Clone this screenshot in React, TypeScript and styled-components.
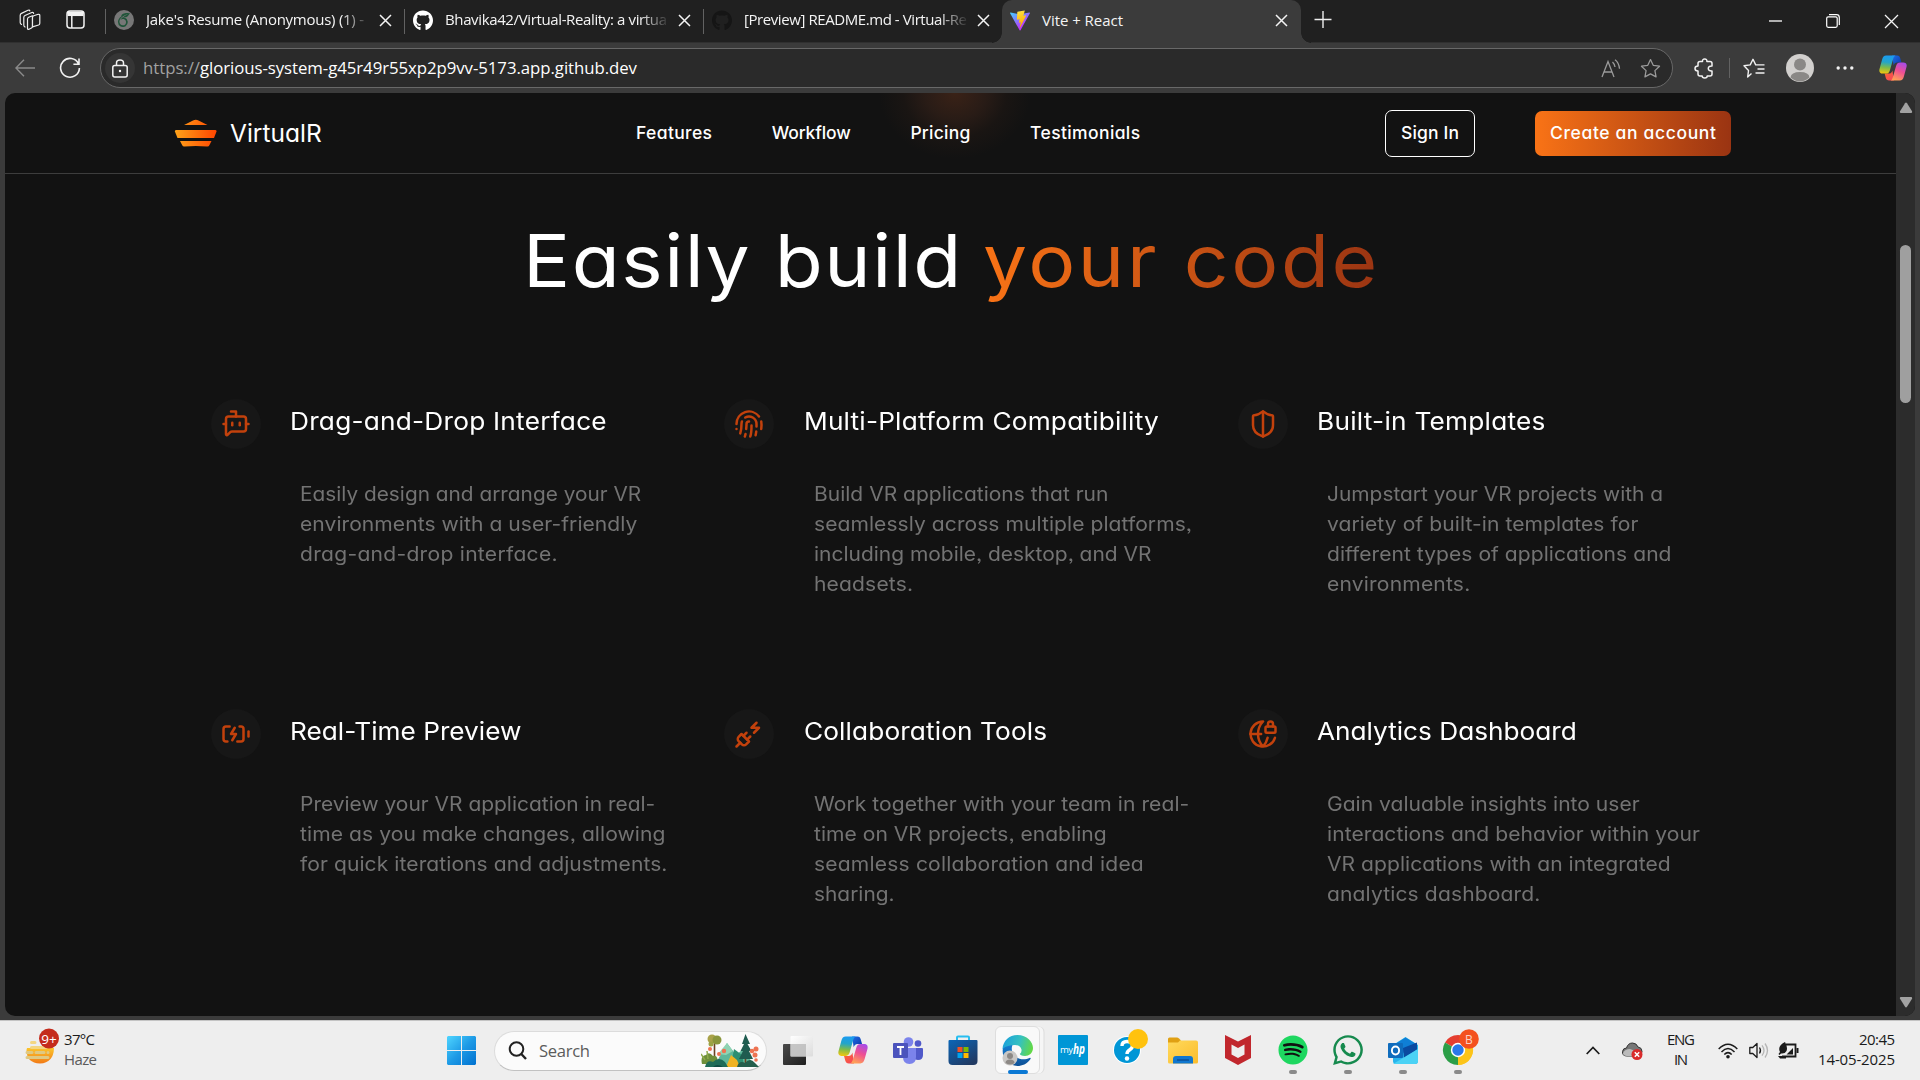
import React, { useLayoutEffect, useRef, useState } from "react";
import styled, { createGlobalStyle, css } from "styled-components";
import {
  BatteryCharging,
  BotMessageSquare,
  Fingerprint,
  GlobeLock,
  PlugZap,
  ShieldHalf,
} from "lucide-react";
import { FaGithub, FaSpotify, FaWhatsapp } from "react-icons/fa";
import { SiOverleaf } from "react-icons/si";

const UI = `"Open Sans", "Noto Sans", sans-serif`;
const SITE = `Inter, "Open Sans", sans-serif`;

const Global = createGlobalStyle`
  * { box-sizing: border-box; }
  body { margin: 0; background: #3b3b3b; overflow: hidden; }
  p, h1, h2 { margin: 0; font-weight: 400; }
`;

/* ---------- text set to a fixed measure ---------- */

const Measure = styled.span`
  display: inline-block;
  white-space: pre;
`;

const Wide = styled.span<{ $gradient?: boolean }>`
  display: inline-block;
  white-space: pre;
  transform-origin: 0 50%;
  ${(p) => p.$gradient && css`
    padding-bottom: 12px;
    background: linear-gradient(90deg, #f97316, #9a3412);
    background-clip: text;
    -webkit-background-clip: text;
    color: transparent;
  `}
`;

/* Tracks the letters out (or in) until the line is w pixels long. */
function Fit({ w, children }: { w: number; children: string }) {
  const ref = useRef<HTMLSpanElement>(null);
  const [gap, setGap] = useState(0);
  useLayoutEffect(() => {
    const el = ref.current;
    if (!el) return;
    const natural = el.getBoundingClientRect().width;
    setGap((w - natural) / Math.max(1, children.length - 1));
  }, [w, children]);
  return (
    <Measure ref={ref} style={{ letterSpacing: gap, marginRight: -gap }}>
      {children}
    </Measure>
  );
}

function Stretch({ w, gradient, children }: { w: number; gradient?: boolean; children: string }) {
  const ref = useRef<HTMLSpanElement>(null);
  const [k, setK] = useState({ scale: 1, gap: 0 });
  useLayoutEffect(() => {
    const el = ref.current;
    if (!el) return;
    const natural = el.offsetWidth;
    const scale = Math.min(w / natural, 1.075);
    setK({ scale, gap: (w / scale - natural) / Math.max(1, children.length - 1) });
  }, [w, children]);
  return (
    <Measure style={{ width: w }}>
      <Wide ref={ref} $gradient={gradient} style={{ transform: `scaleX(${k.scale})`, letterSpacing: k.gap }}>{children}</Wide>
    </Measure>
  );
}

/* ---------- shell ---------- */

const Screen = styled.div`
  width: 1920px;
  height: 1080px;
  display: flex;
  flex-direction: column;
  background: #3b3b3b;
  font-family: ${UI};
  overflow: hidden;
`;

const Center = styled.span<{ w: number; $shift?: number }>`
  flex: none;
  width: ${(p) => p.w}px;
  padding-left: ${(p) => p.$shift ?? 0}px;
  display: flex;
  align-items: center;
  justify-content: center;
  svg { display: block; flex: none; }
`;

/* ---------- tab strip ---------- */

const TabStrip = styled.div`
  flex: none;
  height: 43px;
  display: flex;
  align-items: stretch;
  background: #202020;
  color: #f4f4f4;
  border-bottom: 1px solid #303030;
`;

const StripTools = styled.div`
  width: 105px;
  padding: 0 20px 3px 19px;
  display: flex;
  align-items: center;
  justify-content: space-between;
`;

const Tab = styled.div<{ w: number; $active?: boolean }>`
  position: relative;
  width: ${(p) => p.w}px;
  height: ${(p) => (p.$active ? 43 : 42)}px;
  padding: 0 0 2px 8px;
  display: flex;
  align-items: center;
  background: ${(p) => (p.$active ? "#3b3b3b" : "transparent")};
  border-radius: 10px 10px 0 0;
  &::before, &::after {
    content: "";
    display: ${(p) => (p.$active ? "block" : "none")};
    position: absolute;
    bottom: 0;
    width: 10px;
    height: 10px;
  }
  &::before { left: -10px; background: radial-gradient(circle at 0 0, #202020 9.5px, #3b3b3b 10px); }
  &::after { right: -10px; background: radial-gradient(circle at 100% 0, #202020 9.5px, #3b3b3b 10px); }
`;

const Divider = styled.i<{ $hidden?: boolean; $bar?: boolean }>`
  flex: none;
  width: 1px;
  height: ${(p) => (p.$bar ? 20 : 25)}px;
  margin-top: ${(p) => (p.$bar ? 0 : 9)}px;
  background: ${(p) => (p.$hidden ? "transparent" : "#626262")};
`;

const TabTitle = styled.div<{ $fade?: boolean }>`
  width: 224px;
  margin-left: 12px;
  padding-bottom: 2px;
  font-size: 15px;
  line-height: 30px;
  white-space: nowrap;
  mask-image: ${(p) => (p.$fade ? "linear-gradient(90deg, #000 195px, transparent 225px)" : "none")};
`;

const Favicon = styled.span<{ $bg?: string; $fg?: string }>`
  flex: none;
  width: 20px;
  height: 20px;
  border-radius: 50%;
  display: flex;
  align-items: center;
  justify-content: center;
  background: ${(p) => p.$bg ?? "transparent"};
  color: ${(p) => p.$fg ?? "#fff"};
`;

const WindowControls = styled.div`
  margin-left: auto;
  display: flex;
`;

/* ---------- toolbar ---------- */

const Toolbar = styled.div`
  flex: none;
  height: 50px;
  display: flex;
  align-items: center;
  color: #eee;
`;

const Address = styled.div`
  flex: none;
  width: 1573px;
  height: 40px;
  padding: 0 0 0 4px;
  display: flex;
  align-items: center;
  border: 1px solid #686868;
  border-radius: 20px;
  background: #2a2a2a;
`;

const LockDisc = styled.span`
  width: 30px;
  height: 30px;
  border-radius: 50%;
  background: #353535;
  display: flex;
  align-items: center;
  justify-content: center;
`;

const Url = styled.div`
  flex: 1;
  margin-left: 8px;
  font-size: 16.8px;
  line-height: 34px;
  color: #fff;
`;

const Scheme = styled.span`
  color: #a2a2a2;
`;

/* ---------- page ---------- */

const Viewport = styled.div`
  flex: none;
  height: 923px;
  margin: 0 5px;
  display: flex;
  border-radius: 10px;
  overflow: hidden;
  background: #121212;
`;

const Page = styled.div`
  width: 1891px;
  font-family: ${SITE};
  font-feature-settings: "cv11", "ss03";
  font-optical-sizing: none;
  color: #fff;
`;

const Nav = styled.nav`
  height: 81px;
  padding: 0 165px 0 169px;
  display: flex;
  align-items: center;
  border-bottom: 1px solid #3d3d3d;
  background: radial-gradient(ellipse 76px 66px at 950px 0, #3a2217 0%, #332018b0 40%, #2a1c1550 68%, #22191500 100%);
`;

const Brand = styled.div`
  width: 462px;
  display: flex;
  align-items: center;
  gap: 13px;
  font-size: 24.5px;
  svg { flex: none; }
`;

const Links = styled.div`
  width: 749px;
  padding-bottom: 1px;
  display: flex;
  gap: 59.7px;
  font-size: 17.5px;
  font-weight: 500;
`;

const Button = styled.button<{ $filled?: boolean }>`
  height: ${(p) => (p.$filled ? 45 : 47)}px;
  width: ${(p) => (p.$filled ? 196 : 90)}px;
  margin-right: ${(p) => (p.$filled ? 0 : 60)}px;
  padding: 0 0 1px;
  flex: none;
  border: ${(p) => (p.$filled ? "none" : "1px solid #fff")};
  border-radius: 7px;
  background: ${(p) => (p.$filled ? "linear-gradient(90deg, #f97316, #9a3412)" : "transparent")};
  color: #fff;
  font: 500 17.5px ${SITE};
  font-feature-settings: inherit;
`;

const Heading = styled.h1`
  height: 125px;
  padding: 49px 0 0 518px;
  font-size: 73px;
  line-height: 76px;
  display: flex;
  gap: 22px;
`;

const Grid = styled.div`
  margin: 100px 0 0 206px;
  display: grid;
  grid-template-columns: repeat(3, 513.3px);
  grid-auto-rows: 310px;
`;

const Feature = styled.article`
  display: flex;
  gap: 29.3px;
`;

const IconDisc = styled.div`
  flex: none;
  width: 50px;
  height: 50px;
  border-radius: 50%;
  display: flex;
  align-items: center;
  justify-content: center;
  background: #171717;
  color: #c2410c;
`;

const FeatureTitle = styled.h2`
  font-size: 24.4px;
  line-height: 44px;
  white-space: nowrap;
`;

const FeatureText = styled.p`
  padding: 36px 0 0 10px;
  font-size: 19.6px;
  line-height: 30px;
  color: #737373;
  display: flex;
  flex-direction: column;
  align-items: flex-start;
`;

const Scrollbar = styled.div`
  width: 19px;
  padding: 9px 0 8px;
  display: flex;
  flex-direction: column;
  align-items: center;
  background: #2c2c2c;
`;

const Thumb = styled.div`
  width: 11px;
  height: 158px;
  margin-top: 131px;
  margin-bottom: auto;
  border-radius: 6px;
  background: #9f9f9f;
`;

/* ---------- taskbar ---------- */

const Taskbar = styled.div`
  margin-top: 4px;
  flex: none;
  height: 60px;
  display: flex;
  align-items: center;
  background: #eeeeee;
  border-top: 1px solid #c4c4c4;
  color: #1b1b1b;
  font-size: 15px;
  line-height: 20px;
`;

const Weather = styled.div`
  width: 447px;
  padding-left: 22px;
  display: flex;
  align-items: center;
  gap: 4px;
`;

const Lines = styled.div<{ $align?: string }>`
  display: flex;
  flex-direction: column;
  align-items: ${(p) => p.$align ?? "flex-start"};
  padding-bottom: 4px;
`;

const Muted = styled.span`
  color: #5a5a5a;
`;

const SearchBox = styled.div`
  width: 273px;
  height: 40px;
  margin-left: 18px;
  padding: 0 6px 0 13px;
  display: flex;
  align-items: center;
  border: 1px solid #dcdcdc;
  border-bottom-color: #c2c2c2;
  border-radius: 20px;
  background: #fbfbfb;
  font-size: 16.6px;
  color: #5c5c5c;
`;

const SearchLabel = styled.span`
  flex: 1;
  padding: 0 0 0 12px;
`;

const Apps = styled.div`
  margin-left: 3px;
  height: 59px;
  display: flex;
`;

const AppCell = styled.div<{ $state?: "open" | "active" }>`
  width: 55px;
  display: flex;
  flex-direction: column;
  align-items: center;
  padding-top: 5px;
  &::after {
    content: "";
    width: ${(p) => (p.$state === "active" ? 20 : 8)}px;
    height: 4px;
    border-radius: 2px;
    margin-top: -4px;
    background: ${(p) => (p.$state === "active" ? "#0a78d4" : p.$state ? "#8a8a8a" : "transparent")};
  }
`;

const Slot = styled.div<{ $on?: boolean }>`
  width: 45px;
  height: 48px;
  flex: none;
  display: flex;
  align-items: center;
  justify-content: center;
  border-radius: 6px;
  border: 1px solid ${(p) => (p.$on ? "#dedede" : "transparent")};
  background: ${(p) => (p.$on ? "#f9f9f9" : "transparent")};
  box-shadow: ${(p) => (p.$on ? "4px 0 0 -0.5px #f6f6f6, 5px 0 0 -0.5px #dcdcdc" : "none")};
  svg { flex: none; overflow: visible; }
`;

const Tray = styled.div`
  margin-left: auto;
  padding-right: 25px;
  display: flex;
  align-items: center;
`;

/* ---------- drawings ---------- */

const Cross = ({ s = 11, w = 1.5 }: { s?: number; w?: number }) => (
  <svg width={s + 2} height={s + 2} viewBox={`-1 -1 ${s + 2} ${s + 2}`} stroke="currentColor" strokeWidth={w}>
    <path d={`M0 0L${s} ${s}M${s} 0L0 ${s}`} />
  </svg>
);

const Workspaces = () => (
  <svg width="22" height="22" viewBox="0 0 22 22" fill="#202020" stroke="#eee" strokeWidth="1.2" strokeLinejoin="round" strokeLinecap="round">
    <path d="M2.500 15.500q-1.300-.6-1.300-2V6.500q0-1.500 1.300-2.100L9 1.300q1.600-.6 1.800.6" fill="none" />
    <path d="M6 18q-1.200-.6-1.200-2V8.500q0-1.400 1.200-2L12.800 3.500q1.600-.5 1.800.8" fill="none" />
    <path d="M8.500 10.200q0-1.400 1.200-1.900l3.800-1.500v10.500q0 1.200-1 1.700l-2.500 1.200q-1.500.5-1.500-1z" />
    <path d="M13.500 8.500q0-1.300 1.200-1.800l4.500-1.400q1.600-.3 1.600 1.200v7.800q0 1.300-1.200 1.700l-6.100 1.800z" />
  </svg>
);

const VerticalTabs = () => (
  <svg width="19" height="19" viewBox="0 0 19 19" fill="none" stroke="#f2f2f2" strokeWidth="1.500">
    <rect x="1" y="1" width="17" height="17" rx="3" />
    <path d="M1.500 3.800h16" strokeWidth="4.500" />
    <path d="M5.800 5v13" />
  </svg>
);

const ViteLogo = () => (
  <svg width="21" height="21" viewBox="0 0 256 257">
    <defs>
      <linearGradient id="va" x1="0" y1="0" x2=".6" y2=".8"><stop stopColor="#41d1ff" /><stop offset="1" stopColor="#bd34fe" /></linearGradient>
      <linearGradient id="vb" x1=".4" y1="0" x2=".55" y2=".9"><stop stopColor="#ffea83" /><stop offset=".1" stopColor="#ffdd35" /><stop offset="1" stopColor="#ffa800" /></linearGradient>
    </defs>
    <path fill="url(#va)" d="M255 37 134 253c-2 4-8 4-11 0L1 37c-3-5 1-11 7-10l120 22 120-22c6-1 10 5 7 10Z" />
    <path fill="url(#vb)" d="M186 0 96 18c-1 0-2 1-2 3l-6 93c0 2 2 4 4 4l25-6c3 0 5 2 4 4l-7 37c-1 2 1 5 4 4l15-5c3-1 5 2 4 4l-12 57c0 4 4 6 6 3l2-3 73-146c1-2-1-5-4-5l-26 5c-2 1-5-1-4-4l17-58c1-3-1-5-3-5Z" />
  </svg>
);

const STAR = "M10 1.500 12.600 7l6 .8-4.400 4.200 1.100 6L10 15.100 4.700 18l1.100-6L1.400 7.800l6-.8z";

const CopilotMark = ({ size, id }: { size: number; id: string }) => (
  <svg width={size} height={size * 0.93} viewBox="0 0 30 28">
    <defs>
      <linearGradient id={id + "a"} x1=".3" y1="0" x2=".2" y2="1"><stop stopColor="#1b9bf0" /><stop offset=".35" stopColor="#23a5c9" /><stop offset=".65" stopColor="#7dbb4a" /><stop offset="1" stopColor="#f6c70c" /></linearGradient>
      <linearGradient id={id + "b"} x1=".8" y1="0" x2=".4" y2="1"><stop stopColor="#a44bec" /><stop offset=".5" stopColor="#ef4f92" /><stop offset="1" stopColor="#ff9f57" /></linearGradient>
      <linearGradient id={id + "c"} x1="0" y1="0" x2="1" y2="1"><stop stopColor="#1f6fe6" /><stop offset="1" stopColor="#0c35a6" /></linearGradient>
      <linearGradient id={id + "d"} x1="0" y1="0" x2="1" y2="1"><stop stopColor="#fc6b2d" /><stop offset="1" stopColor="#f4415f" /></linearGradient>
    </defs>
    <path fill={`url(#${id}c)`} d="M14 .5h5.500c2 0 2.800 1.200 3.300 3l1.300 4.500h-4.500c-2.300 0-3.300 1.300-3.900 3.400z" />
    <path fill={`url(#${id}d)`} d="M16 27.500h-5.200c-2 0-3-1.200-3.600-3L6 20h4.500c2.300 0 3.300-1.300 3.900-3.400z" />
    <path fill={`url(#${id}a)`} d="M7.700.5h10c-1.600.8-2 2-2.500 3.600l-3.500 12.200c-.8 2.600-2 3.700-4.600 3.700H4c-3 0-4.300-2-3.500-5L3.300 4.800C4 2 5.300.5 7.700.5z" />
    <path fill={`url(#${id}b)`} d="M22.300 27.500h-10c1.600-.8 2-2 2.500-3.600l3.500-12.200c.8-2.600 2-3.700 4.600-3.700H26c3 0 4.300 2 3.500 5l-2.800 10.200c-.7 2.800-2 4.300-4.400 4.300z" />
  </svg>
);

const VirtualRLogo = () => (
  <svg width="43" height="28" viewBox="0 0 43 28">
    <defs><linearGradient id="vr" x1="0" x2="43" y1="0" y2="0" gradientUnits="userSpaceOnUse"><stop stopColor="#ffa51a" /><stop offset="1" stopColor="#ff4400" /></linearGradient></defs>
    <g fill="url(#vr)">
      <path d="M10 6 19 1.500q2.800-1.500 5.500 0L33.500 6z" />
      <path d="M2 11h39.500q1.300 0 1 1.500L40 19H3.500L.900 12.500Q.7 11 2 11z" />
      <path d="M6 22h31.500l-2 4q-.8 1.800-2.600 1.500-11.100-1.200-22.200 0-1.800.3-2.600-1.500z" />
    </g>
  </svg>
);

const HazeIcon = () => (
  <svg width="38" height="38" viewBox="0 0 38 38" overflow="visible">
    <defs><linearGradient id="sun" x1="0" y1="0" x2="0" y2="1"><stop stopColor="#fbc52d" /><stop offset="1" stopColor="#f27a16" /></linearGradient></defs>
    <path d="M5 16h27q-.500 15-14 15.500Q4.500 31 4.500 18z" fill="url(#sun)" />
    <g stroke="#f3d680" strokeWidth="3" strokeLinecap="round"><path d="M9.500 10.500H13M9.500 15.500H24" /><path d="M5 20.500h5m4 0h8m4 0h0M5 25.500h21" stroke="#dfc983" /></g>
    <circle cx="27" cy="6.500" r="10" fill="#c42b1c" />
    <text x="27" y="11.500" fontSize="13.500" fill="#fff" textAnchor="middle" fontFamily="Open Sans">9+</text>
  </svg>
);

const StartIcon = () => (
  <svg width="29" height="29" viewBox="0 0 29 29">
    <defs><linearGradient id="win" x1="0" y1="0" x2="29" y2="29" gradientUnits="userSpaceOnUse"><stop stopColor="#4fd5ff" /><stop offset=".5" stopColor="#1e9be6" /><stop offset="1" stopColor="#0070cf" /></linearGradient></defs>
    <path fill="url(#win)" d="M1 0h13v14H0V1zM15 0h13l1 1v13H15zM0 15h14v14H1l-1-1zM15 15h14v13l-1 1H15z" />
  </svg>
);

const Scenery = () => (
  <svg width="59" height="33" viewBox="0 0 59 33">
    <path d="M14 31 26 9l9 12 6-5 13 15z" fill="#5fb79a" />
    <path d="M17 20 26 9l6 8-7 4z" fill="#8fd3b3" />
    <path d="M33 15l8 6 2 10H30z" fill="#2e8f72" />
    <path d="M25 33 30 21l6 5 3 7z" fill="#f0b323" />
    <path d="M13.500 6v16M44.500 4v26" stroke="#6b4322" strokeWidth="1.600" />
    <circle cx="11" cy="5" r="4.500" fill="#a9a24a" /><circle cx="16" cy="6" r="4.500" fill="#8a963c" /><circle cx="10" cy="10" r="2.500" fill="#9ba344" />
    <path d="M44.500 0 49 10h-2.500l4 7h-2.500l4 8H38l4-8h-2.500l3.500-7h-2z" fill="#1f5c50" />
    <path d="M1 30q-2-8 4-9 3-4 7 1 5-2 5 8z" fill="#6e8f3a" /><path d="M0 20l4 6M6 17l1 8" stroke="#8fa94a" strokeWidth="1.500" />
    <path d="M4 33q2-8 8-5 6-6 12 0l3 5z" fill="#1e6b58" /><path d="M36 33q2-7 8-4 5-6 10 0l4 4z" fill="#255e4c" />
    <path d="M12 33q4-4 10 0z" fill="#0f4a43" />
    <g fill="#ee7352"><circle cx="9" cy="15" r="2" /><circle cx="18" cy="20" r="2" /><circle cx="23" cy="17" r="2.200" /><circle cx="51" cy="17" r="2.300" /><circle cx="55" cy="15" r="2.500" /><circle cx="54" cy="21" r="2.500" /><circle cx="55" cy="26" r="1.800" /></g>
  </svg>
);

const TaskView = () => (
  <svg width="30" height="29" viewBox="0 0 30 29">
    <defs><linearGradient id="tv" x1="0" y1="0" x2="1" y2="1"><stop stopColor="#4a4a4a" /><stop offset="1" stopColor="#1f1f1f" /></linearGradient><linearGradient id="tw" x1="0" y1="0" x2="1" y2="1"><stop stopColor="#fff" /><stop offset="1" stopColor="#dcdcdc" /></linearGradient></defs>
    <rect y="8" width="23" height="21" rx="1" fill="url(#tv)" /><rect x="7.500" width="22.500" height="20.500" rx="1" fill="url(#tw)" /><path d="M7.500 8H23v12.500H7.500z" fill="#b9b9b9" opacity=".8" />
  </svg>
);

const Teams = () => (
  <svg width="30" height="27" viewBox="0 0 30 27">
    <circle cx="15.500" cy="5" r="4.800" fill="#7b83eb" /><circle cx="25" cy="6.500" r="3.300" fill="#5059c9" />
    <path d="M20 11h9q1 0 1 1v6q0 5-5 5-3 0-5-2z" fill="#5059c9" /><path d="M11 11h12v9q0 7-6.500 7T10 20z" fill="#7b83eb" />
    <rect y="6" width="15" height="15" rx="1" fill="#4b53bc" /><path d="M4 10h7M7.500 10v8" stroke="#fff" strokeWidth="1.800" />
  </svg>
);

const Store = () => (
  <svg width="30" height="30" viewBox="0 0 30 30">
    <defs><linearGradient id="st" x1="0" y1="0" x2=".7" y2="1"><stop stopColor="#0a66b8" /><stop offset="1" stopColor="#213a63" /></linearGradient></defs>
    <path d="M9 5.500V2.500Q9 1.500 10 1.500h10q1 0 1 1v3" fill="none" stroke="#27bdf0" strokeWidth="2" /><path d="M1.500 5h27q1 0 1 1v20q0 4-4 4h-21q-4 0-4-4V6q0-1 1-1z" fill="url(#st)" />
    <path d="M9.500 12h5v5h-5z" fill="#f25022" /><path d="M15.500 12h5v5h-5z" fill="#7fba00" /><path d="M9.500 18h5v5h-5z" fill="#00a4ef" /><path d="M15.500 18h5v5h-5z" fill="#ffb900" />
  </svg>
);

const Edge = () => (
  <svg width="31" height="31" viewBox="0 0 31 31">
    <defs><linearGradient id="ea" x1="0" y1=".3" x2="1" y2=".5"><stop stopColor="#1aa0dc" /><stop offset=".55" stopColor="#35c1c0" /><stop offset="1" stopColor="#63d945" /></linearGradient><linearGradient id="eb" x1="0" y1="0" x2="0" y2="1"><stop stopColor="#1683d8" /><stop offset="1" stopColor="#0d4f95" /></linearGradient></defs>
    <path fill="url(#eb)" d="M1 13C3 9 7 7 12 8c-3 3-3 8 0 12 4 5 11 5 15.500 3 1-.5 1.500.3 1 1C25 29 20 31 15.500 31 6 31-1 22 1 13z" />
    <path fill="url(#ea)" d="M.5 14C1 6 7 0 15.500 0 25 0 31 7 31 13c0 5-4 8-8 8-4 0-6-1.500-5-3 3-4 0-8-5-8C8 10 4 11 .5 14z" />
    <circle cx="16" cy="15.500" r="3.500" fill="#f9f9f9" />
    <circle cx="8" cy="23" r="7.500" fill="#c9c7c5" /><circle cx="8" cy="21" r="3" fill="#8c8885" /><path d="M3.500 28q0-3.500 4.500-3.500t4.500 3.500q-4 3-9 0z" fill="#8c8885" />
  </svg>
);

const MyHp = () => (
  <svg width="30" height="30" viewBox="0 0 30 30"><rect width="30" height="30" rx="1" fill="#0096d6" /><text x="2" y="18" fontSize="9.500" fill="#fff" fontFamily="Open Sans" textLength="13">my</text><text x="15" y="19" fontSize="14" fontStyle="italic" fontWeight="700" fill="#fff" fontFamily="Open Sans" textLength="12" lengthAdjust="spacingAndGlyphs">hp</text></svg>
);

const Help = () => (
  <svg width="30" height="30" viewBox="0 0 30 30"><circle cx="14" cy="15" r="14" fill="#fff" /><circle cx="14" cy="15" r="13" fill="#0096d6" /><path d="M9 11q0-4.500 5-4.500 5.500 0 5.500 4 0 2.500-2.700 4.200Q14 16.500 14 19" fill="none" stroke="#fff" strokeWidth="3.400" /><circle cx="14" cy="23.500" r="2.200" fill="#fff" /><circle cx="25" cy="4" r="10" fill="#ffc20e" /></svg>
);

const Folder = () => (
  <svg width="30" height="27" viewBox="0 0 30 27"><defs><linearGradient id="fo" x1="0" y1="0" x2="1" y2="1"><stop stopColor="#ffd95c" /><stop offset="1" stopColor="#fbbd2c" /></linearGradient></defs><path d="M0 2Q0 .500 1.500.500H9q1 0 2 1l2 2V8H0z" fill="#e0a013" /><path d="M0 5.500h10l2-2h16q2 0 2 2V25q0 1.500-1.500 1.500h-27Q0 26.500 0 25z" fill="url(#fo)" /><path d="M5 26.500V22q0-3 3-3h14q3 0 3 3v4.500z" fill="#1077cf" /><path d="M9 23h12" stroke="#0a4f97" strokeWidth="1.500" /></svg>
);

const McAfee = () => (
  <svg width="28" height="30" viewBox="0 0 28 30"><path d="M1 0l13 6.500L27 0v23l-13 7-13-7z" fill="#c1272d" /><path d="M7.500 9.500 14 13l6.500-3.500v10L14 23l-6.500-3.500z" fill="#eee" /></svg>
);

const Outlook = () => (
  <svg width="30" height="27" viewBox="0 0 30 27"><path d="M5 8 17.500 0 30 8v16q0 3-3 3H8q-3 0-3-3z" fill="#28b4ec" /><path d="M8 6.500 17.500.5 28 7l-13 9H8z" fill="#0f7fd6" /><path d="M15 11l14-5.500v7L16 21z" fill="#0a4aa0" /><path d="M5 27 30 12v12q0 3-3 3z" fill="#4bd2f5" /><rect y="6" width="15" height="15" rx="1" fill="#0f6cbd" /><ellipse cx="7.500" cy="13.500" rx="3.600" ry="4" fill="none" stroke="#fff" strokeWidth="1.900" /></svg>
);

const Chrome = () => (
  <svg width="30" height="30" viewBox="0 0 30 30">
    <path d="M15 15 2 7.500A15 15 0 0 1 28 7.500z" fill="#e53e30" /><path d="M15 15 28 7.500A15 15 0 0 1 15 30z" fill="#fcc419" /><path d="M15 15v15A15 15 0 0 1 2 7.500z" fill="#2b9e47" />
    <path d="M15 8.200h13.300A15 15 0 0 1 15 30l6-11.500z" fill="#fcc419" /><circle cx="15" cy="15" r="7.200" fill="#fff" /><circle cx="15" cy="15" r="5.700" fill="#2a78ea" />
    <circle cx="26" cy="4" r="9.800" fill="#f4511e" /><text x="26" y="8.500" fontSize="12" fill="#fbd3c4" textAnchor="middle" fontFamily="Open Sans">B</text>
  </svg>
);

const SpotifyDisc = styled.span`
  display: flex;
  border-radius: 50%;
  background: radial-gradient(#111 60%, transparent 62%);
`;

/* ---------- data ---------- */

const FEATURES: { Icon: React.ElementType; title: string; w: number; lines: [string, number][] }[] = [
  { Icon: BotMessageSquare, title: "Drag-and-Drop Interface", w: 317, lines: [["Easily design and arrange your VR", 341], ["environments with a user-friendly", 337], ["drag-and-drop interface.", 258]] },
  { Icon: Fingerprint, title: "Multi-Platform Compatibility", w: 355, lines: [["Build VR applications that run", 295], ["seamlessly across multiple platforms,", 378], ["including mobile, desktop, and VR", 338], ["headsets.", 99]] },
  { Icon: ShieldHalf, title: "Built-in Templates", w: 229, lines: [["Jumpstart your VR projects with a", 336], ["variety of built-in templates for", 311], ["different types of applications and", 344], ["environments.", 143]] },
  { Icon: BatteryCharging, title: "Real-Time Preview", w: 231, lines: [["Preview your VR application in real-", 355], ["time as you make changes, allowing", 366], ["for quick iterations and adjustments.", 367]] },
  { Icon: PlugZap, title: "Collaboration Tools", w: 243, lines: [["Work together with your team in real-", 375], ["time on VR projects, enabling", 293], ["seamless collaboration and idea", 330], ["sharing.", 81]] },
  { Icon: GlobeLock, title: "Analytics Dashboard", w: 260, lines: [["Gain valuable insights into user", 313], ["interactions and behavior within your", 373], ["VR applications with an integrated", 344], ["analytics dashboard.", 213]] },
];

const APPS: { icon: React.ReactNode; state?: "open" | "active" }[] = [
  { icon: <TaskView /> },
  { icon: <CopilotMark size={30} id="cb" /> },
  { icon: <Teams /> },
  { icon: <Store /> },
  { icon: <Edge />, state: "active" },
  { icon: <MyHp /> },
  { icon: <Help /> },
  { icon: <Folder /> },
  { icon: <McAfee /> },
  { icon: <SpotifyDisc><FaSpotify size={30} color="#1ed760" /></SpotifyDisc>, state: "open" },
  { icon: <FaWhatsapp size={34} color="#168a4e" />, state: "open" },
  { icon: <Outlook />, state: "open" },
  { icon: <Chrome />, state: "open" },
];

/* ---------- sections ---------- */

function Tabs() {
  return (
    <TabStrip>
      <StripTools><Workspaces /><VerticalTabs /></StripTools>
      <Divider />
      <Tab w={298}>
        <Favicon $bg="#777777" $fg="#1f5438"><SiOverleaf size={14} /></Favicon>
        <TabTitle $fade><Fit w={218}>Jake's Resume (Anonymous) (1) -</Fit></TabTitle>
        <Center w={31}><Cross /></Center>
      </Tab>
      <Divider />
      <Tab w={298}>
        <Favicon><FaGithub size={21} /></Favicon>
        <TabTitle $fade><Fit w={222}>Bhavika42/Virtual-Reality: a virtua</Fit></TabTitle>
        <Center w={31}><Cross /></Center>
      </Tab>
      <Divider />
      <Tab w={297}>
        <Favicon $fg="#151515"><FaGithub size={21} /></Favicon>
        <TabTitle $fade><Fit w={223}>[Preview] README.md - Virtual-Re</Fit></TabTitle>
        <Center w={31}><Cross /></Center>
      </Tab>
      <Divider $hidden />
      <Tab w={299} $active>
        <Favicon><ViteLogo /></Favicon>
        <TabTitle><Fit w={81}>Vite + React</Fit></TabTitle>
        <Center w={31}><Cross /></Center>
      </Tab>
      <Center w={44}>
        <svg width="18" height="20" viewBox="0 0 18 20" stroke="#eee" strokeWidth="1.400"><path d="M9 0v17M.5 8.500h17" /></svg>
      </Center>
      <WindowControls>
        <Center w={58}><svg width="13" height="2"><path d="M0 1h13" stroke="#fff" strokeWidth="1.300" /></svg></Center>
        <Center w={58}>
          <svg width="14" height="14" viewBox="0 0 14 14" fill="none" stroke="#fff" strokeWidth="1.200"><rect x=".7" y="2.800" width="10.500" height="10.500" rx="1.500" /><path d="M3 .7h7.500q2.800 0 2.800 2.800V11" /></svg>
        </Center>
        <Center w={58}><Cross s={13} w={1.3} /></Center>
      </WindowControls>
    </TabStrip>
  );
}

function Bar() {
  return (
    <Toolbar>
      <Center w={50}>
        <svg width="20" height="18" viewBox="0 0 20 18" fill="none" stroke="#8b8b8b" strokeWidth="1.400"><path d="M20 9H1M9 .7.900 9 9 17.300" /></svg>
      </Center>
      <Center w={40}>
        <svg width="22" height="22" viewBox="0 0 22 22" fill="none" stroke="#f2f2f2" strokeWidth="1.600"><path d="M19.500 6.800A9.400 9.400 0 1 0 20.400 11M20 1.500v5.700h-5.600" /></svg>
      </Center>
      <Center w={10} />
      <Address>
        <LockDisc>
          <svg width="16" height="19" viewBox="0 0 16 19" fill="none" stroke="#f2f2f2" strokeWidth="1.500"><rect x=".8" y="6.500" width="14.400" height="11.500" rx="2" /><path d="M4.500 6.500V4q0-3 3.500-3t3.500 3v2.500" /><circle cx="8" cy="12" r="1.200" fill="#fff" stroke="none" /></svg>
        </LockDisc>
        <Url><Scheme><Fit w={57}>https://</Fit></Scheme><Fit w={437}>glorious-system-g45r49r55xp2p9vv-5173.app.github.dev</Fit></Url>
        <Center w={40}>
          <svg width="20" height="19" viewBox="0 0 20 19" fill="none" stroke="#9b9b9b" strokeWidth="1.300"><path d="M1 18 7 2.500 13 18M3 13h8M11.500 3q2 1.800 2.500 5M14 .7q4 3 4.500 9" /></svg>
        </Center>
        <Center w={39}><svg width="21" height="21" viewBox="0 0 20 20" fill="none" stroke="#9b9b9b" strokeWidth="1.200" strokeLinejoin="round"><path d={STAR} /></svg></Center>
        <Center w={2} />
      </Address>
      <Center w={56} $shift={7}>
        <svg width="21" height="21" viewBox="0 0 21 21" fill="none" stroke="#f2f2f2" strokeWidth="1.500" strokeLinejoin="round"><path d="M6 3.500h2.500Q8.300 1 10.700 1t2.200 2.500H16q2 0 2 2V8q-3.700-.200-3.700 2.500T18 13v3q0 2-2 2h-2.800q0 2-2.500 2t-2.500-2H6q-2 0-2-2v-3Q1 13 1 10.500T4 8V5.500q0-2 2-2z" /></svg>
      </Center>
      <Divider $bar />
      <Center w={49}>
        <svg width="23" height="21" viewBox="0 0 23 21" fill="none" stroke="#f2f2f2" strokeWidth="1.400" strokeLinejoin="round"><path d="M8.500 15.500 4.700 19l.8-6.500L1 7.800l6.200-.9L10 1.300l2.700 5.600h8.800M14.500 11h7M12.500 15h9" /></svg>
      </Center>
      <Center w={42}>
        <svg width="28" height="28" viewBox="0 0 28 28"><circle cx="14" cy="14" r="14" fill="#d2d0ce" /><circle cx="14" cy="10.500" r="6" fill="#8a8886" /><path d="M4.500 23.500Q5 18 14 18t9.500 5.500Q14 31.500 4.500 23.500z" fill="#8a8886" /></svg>
      </Center>
      <Center w={47}>
        <svg width="18" height="4" fill="#f2f2f2"><circle cx="2.200" cy="2" r="1.700" /><circle cx="9" cy="2" r="1.700" /><circle cx="15.800" cy="2" r="1.700" /></svg>
      </Center>
      <Center w={50}><CopilotMark size={28} id="ca" /></Center>
    </Toolbar>
  );
}

function Site() {
  return (
    <Page>
      <Nav>
        <Brand><VirtualRLogo /><Stretch w={92}>VirtualR</Stretch></Brand>
        <Links>
          <Fit w={76}>Features</Fit><Fit w={79}>Workflow</Fit><Fit w={60}>Pricing</Fit><Fit w={110}>Testimonials</Fit>
        </Links>
        <Button><Fit w={58}>Sign In</Fit></Button>
        <Button $filled><Fit w={166}>Create an account</Fit></Button>
      </Nav>
      <Heading><Stretch w={438}>Easily build</Stretch><Stretch w={394} gradient>your code</Stretch></Heading>
      <Grid>
        {FEATURES.map(({ Icon, title, w, lines }) => (
          <Feature key={title}>
            <IconDisc><Icon size={30} strokeWidth={2} /></IconDisc>
            <div>
              <FeatureTitle><Stretch w={w}>{title}</Stretch></FeatureTitle>
              <FeatureText>{lines.map(([t, lw]) => <Stretch key={t} w={lw}>{t}</Stretch>)}</FeatureText>
            </div>
          </Feature>
        ))}
      </Grid>
    </Page>
  );
}

function Dock() {
  return (
    <Taskbar>
      <Weather>
        <HazeIcon />
        <Lines><Fit w={31}>37°C</Fit><Muted><Fit w={33}>Haze</Fit></Muted></Lines>
      </Weather>
      <StartIcon />
      <SearchBox>
        <svg width="19" height="20" viewBox="0 0 19 20" fill="none" stroke="#222" strokeWidth="2"><circle cx="8.500" cy="8" r="6.800" /><path d="m13.300 13 4.700 5" strokeWidth="2.400" /></svg>
        <SearchLabel><Fit w={51}>Search</Fit></SearchLabel>
        <Scenery />
      </SearchBox>
      <Apps>
        {APPS.map((a, i) => (
          <AppCell key={i} $state={a.state}><Slot $on={a.state === "active"}>{a.icon}</Slot></AppCell>
        ))}
      </Apps>
      <Tray>
        <Center w={40}><svg width="14" height="9" viewBox="0 0 14 9" fill="none" stroke="#1b1b1b" strokeWidth="1.700"><path d="m.7 8 6.300-6.500L13.300 8" /></svg></Center>
        <Center w={40}>
          <svg width="22" height="18" viewBox="0 0 22 18"><path d="M5 14Q0 14 .5 9.500 1 6 4.500 6 6 1 10.500 1q4 0 5.500 4 4 .5 4 4.500T16 14z" fill="#777" stroke="#333" strokeWidth="1" /><path d="M1 11Q3 7 8 7l8 3-2 4H5q-4 0-4-3z" fill="#bbb" /><circle cx="15" cy="12.500" r="5.500" fill="#d92b2b" /><path d="m12.800 10.300 4.400 4.400m0-4.400-4.400 4.400" stroke="#fff" strokeWidth="1.500" /></svg>
        </Center>
        <Center w={56}><Lines $align="center"><Fit w={28}>ENG</Fit><Fit w={14}>IN</Fit></Lines></Center>
        <Center w={37}>
          <svg width="20" height="16" viewBox="0 0 20 16" fill="none" stroke="#1b1b1b" strokeWidth="1.500"><path d="M.7 6Q10-3.500 19.300 6M3.500 9Q10 2.200 16.500 9M6.300 11.500Q10 7.800 13.700 11.500" /><circle cx="10" cy="13.800" r="1.800" fill="#1b1b1b" stroke="none" /></svg>
        </Center>
        <Center w={26}>
          <svg width="20" height="17" viewBox="0 0 20 17" fill="none" stroke="#1b1b1b" strokeWidth="1.300" strokeLinejoin="round"><path d="M.8 5.500h3L8 1.500v14l-4.200-4h-3zM10.500 5.500q2 3 0 6" /><path d="M13 3.300q4 5.200 0 10.400M16 1.500q5 7 0 14" stroke="#b5b5b5" /></svg>
        </Center>
        <Center w={33}>
          <svg width="21" height="17" viewBox="0 0 21 17"><path d="M8 2.500h9.500V14.500H4" fill="none" stroke="#1b1b1b" strokeWidth="1.800" /><path d="M18.500 6H20.500v5h-2zM8.500 12.500l6.500-6.500v6.500z" fill="#1b1b1b" /><path d="M7 0q3 5 1.500 9Q7 12 3 11.500L1.500 13 .5 12 2 10Q-1 4 7 0z" fill="#1b1b1b" /><path d="M0 14h8v2.500H2z" fill="#1b1b1b" /></svg>
        </Center>
        <Center w={13} />
        <Lines $align="flex-end"><Fit w={36}>20:45</Fit><Fit w={77}>14-05-2025</Fit></Lines>
      </Tray>
    </Taskbar>
  );
}

export default function App() {
  return (
    <Screen>
      <Global />
      <Tabs />
      <Bar />
      <Viewport>
        <Site />
        <Scrollbar>
          <svg width="14" height="12"><path d="M6 1.200q1-1.400 2 0l5 8q.6 1.800-1 1.800H2Q.4 11 1 9.200z" fill="#a2a2a2" /></svg>
          <Thumb />
          <svg width="14" height="12"><path d="M6 10.800q1 1.400 2 0l5-8Q13.600 1 12 1H2Q.4 1 1 2.800z" fill="#a2a2a2" /></svg>
        </Scrollbar>
      </Viewport>
      <Dock />
    </Screen>
  );
}
